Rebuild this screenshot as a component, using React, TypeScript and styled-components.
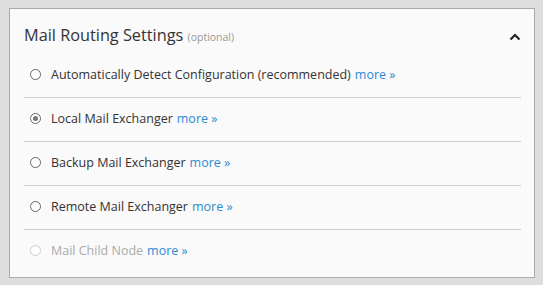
import styled, { createGlobalStyle } from "styled-components";

const GlobalStyle = createGlobalStyle`
  html, body {
    margin: 0;
    padding: 0;
    background: #dedede;
    font-family: "Open Sans", "Liberation Sans", sans-serif;
  }
`;

const Page = styled.div`
  padding: 8px 8px 8px 9px;
`;

const Panel = styled.section`
  background: #fafafa;
  border: 1px solid #aaaaaa;
  height: 268px;
  box-sizing: content-box;
  padding: 0 13px 0 14px;
`;

const Header = styled.header`
  display: flex;
  align-items: center;
  justify-content: space-between;
  padding: 14px 0 5px;
  line-height: 24px;
`;

const Title = styled.h2`
  margin: 0;
  font-size: 16.3px;
  font-weight: 400;
  color: #333333;
`;

const Optional = styled.span`
  font-size: 10.5px;
  color: #999999;
`;

const Toggle = styled.button`
  border: none;
  background: none;
  padding: 0;
  margin: 2px 0 0;
  display: flex;
  align-items: center;
  cursor: pointer;
`;

const Options = styled.ul`
  list-style: none;
  margin: 0;
  padding: 0;
`;

const Option = styled.li<{ $disabled?: boolean }>`
  display: flex;
  align-items: center;
  height: 41px;
  padding-bottom: 2px;
  border-bottom: 1px solid #cccccc;
  font-size: 12.5px;
  color: ${(p) => (p.$disabled ? "#aaaaaa" : "#333333")};

  &:last-child {
    border-bottom: none;
  }
`;

const Radio = styled.span<{ $checked?: boolean; $disabled?: boolean }>`
  width: 11px;
  height: 11px;
  box-sizing: border-box;
  border-radius: 50%;
  border: 1px solid ${(p) => (p.$disabled ? "#cccccc" : "#666666")};
  background: #ffffff;
  margin: 0 10px 0 6px;
  display: flex;
  align-items: center;
  justify-content: center;

  &::after {
    content: "";
    width: 5px;
    height: 5px;
    border-radius: 50%;
    background: ${(p) => (p.$checked ? "#777777" : "transparent")};
  }
`;

const More = styled.a`
  color: #2a8ad2;
  text-decoration: none;
  margin-left: 4px;
`;

const options = [
  { label: "Automatically Detect Configuration (recommended)" },
  { label: "Local Mail Exchanger", checked: true },
  { label: "Backup Mail Exchanger" },
  { label: "Remote Mail Exchanger" },
  { label: "Mail Child Node", disabled: true },
];

function App() {
  return (
    <Page>
      <GlobalStyle />
      <Panel>
        <Header>
          <Title>
            Mail Routing Settings <Optional>(optional)</Optional>
          </Title>
          <Toggle aria-label="collapse">
            <svg width="12" height="8" viewBox="0 0 12 8">
              <polyline
                points="1.5,6.5 6,2 10.5,6.5"
                fill="none"
                stroke="#222"
                strokeWidth="2.2"
              />
            </svg>
          </Toggle>
        </Header>
        <Options>
          {options.map((o) => (
            <Option key={o.label} $disabled={o.disabled}>
              <Radio $checked={o.checked} $disabled={o.disabled} />
              {o.label}
              <More href="#">more »</More>
            </Option>
          ))}
        </Options>
      </Panel>
    </Page>
  );
}

export default App;
